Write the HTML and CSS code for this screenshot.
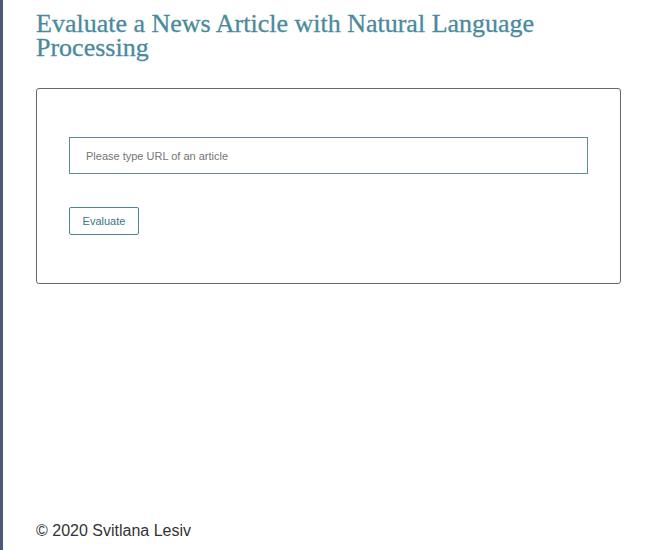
FILE: index.html
```html
<!DOCTYPE html>
<html lang="en">
<head>
<meta charset="utf-8">
<title>Evaluate a News Article</title>
<link rel="stylesheet" href="styles.css">
</head>
<body>
<div class="page">
  <main class="main">
    <h1 class="title">Evaluate a News Article with Natural Language Processing</h1>
    <section class="card">
      <form class="form" onsubmit="return false">
        <input class="url-input" type="text" placeholder="Please type URL of an article">
        <button class="btn" type="submit">Evaluate</button>
      </form>
    </section>
  </main>
  <footer class="footer">© 2020 Svitlana Lesiv</footer>
</div>
</body>
</html>
```

FILE: styles.css
```css
html, body {
  margin: 0;
  padding: 0;
  height: 100%;
}
body {
  background: #4b5a6e;
  font-family: "Liberation Sans", Arial, sans-serif;
}
.page {
  margin-left: 3px;
  min-height: 100%;
  background: #ffffff;
  display: flex;
  flex-direction: column;
  padding: 0 31px 0 33px;
  box-sizing: border-box;
}
.main {
  flex: 1;
}
.title {
  margin: 12px 0 0;
  font-family: "Liberation Serif", "Times New Roman", serif;
  font-weight: normal;
  font-size: 26px;
  line-height: 24px;
  color: #4a8a9c;
  max-width: 560px;
  -webkit-text-stroke: 0.3px #4a8a9c;
}
.card {
  margin-top: 28px;
  border: 1px solid #666;
  border-radius: 3px;
  padding: 48px 32px 48px 32px;
  height: 196px;
  box-sizing: border-box;
}
.form {
  display: flex;
  flex-direction: column;
  align-items: flex-start;
  gap: 33px;
}
.url-input {
  box-sizing: border-box;
  width: 519px;
  height: 37px;
  margin: 0;
  border: 1px solid #5f8c92;
  border-radius: 0;
  padding: 0 16px;
  font-family: "Liberation Sans", Arial, sans-serif;
  font-size: 11px;
  color: #333;
  outline: none;
}
.url-input::placeholder {
  color: #757575;
}
.btn {
  box-sizing: border-box;
  height: 28px;
  width: 70px;
  margin: 0;
  padding: 0;
  background: #fff;
  border: 1px solid #4f8592;
  border-radius: 2px;
  font-family: "Liberation Sans", Arial, sans-serif;
  font-size: 11px;
  color: #3f7382;
}
.footer {
  font-size: 16px;
  color: #333;
  padding-bottom: 10px;
  line-height: 18px;
}
```
